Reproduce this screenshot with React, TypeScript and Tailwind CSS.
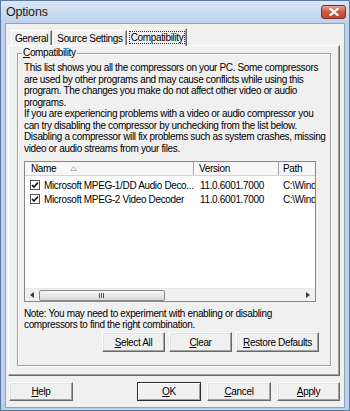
import React from "react";

function U({ children }: { children: React.ReactNode }) {
  return <span className="underline underline-offset-[1px]">{children}</span>;
}

function Btn({
  children,
  w,
  h = 20,
  def = false,
}: {
  children: React.ReactNode;
  w: number;
  h?: number;
  def?: boolean;
}) {
  return (
    <div
      style={{ width: w, height: h }}
      className={
        "flex items-center justify-center bg-[#f0f0f0] text-[10px] text-black border " +
        (def
          ? "border-[#2b2b2b] shadow-[inset_1px_1px_0_#ffffff,inset_-1px_-1px_0_#a0a0a0]"
          : "border-t-[#ffffff] border-l-[#ffffff] border-b-[#696969] border-r-[#696969] shadow-[inset_-1px_-1px_0_#a0a0a0,inset_1px_1px_0_#e3e3e3]")
      }
    >
      {children}
    </div>
  );
}

function Check() {
  return (
    <div className="w-[10px] h-[10px] border border-[#555] bg-white flex items-center justify-center shrink-0">
      <svg width="8" height="8" viewBox="0 0 8 8">
        <path d="M1 4 L3 6 L7 1.5" stroke="#111" strokeWidth="1.6" fill="none" />
      </svg>
    </div>
  );
}

export default function App() {
  const p1 = [
    "This list shows you all the compressors on your PC. Some compressors",
    "are used by other programs and may cause conflicts while using this",
    "program. The changes you make do not affect other video or audio",
    "programs.",
  ];
  const p2 = [
    "If you are experiencing problems with a video or audio compressor you",
    "can try disabling the compressor by unchecking from the list below.",
    "Disabling a compressor will fix problems such as system crashes, missing",
    "video or audio streams from your files.",
  ];
  const rows = [
    ["Microsoft MPEG-1/DD Audio Deco...", "11.0.6001.7000", "C:\\Windows"],
    ["Microsoft MPEG-2 Video Decoder", "11.0.6001.7000", "C:\\Windows"],
  ];
  return (
    <div className="w-[350px] h-[411px] flex flex-col bg-[#bcd2ea] border border-[#5a7aa3] font-['Liberation_Sans',Arial,sans-serif] text-black tracking-[-0.35px] overflow-hidden">
      {/* title bar */}
      <div className="h-[22px] shrink-0 flex items-center justify-between pl-[5px] pr-[3px] bg-gradient-to-b from-[#d9e7f6] to-[#bdd3ec]">
        <span className="text-[12.5px] tracking-[-0.2px] text-[#1a1a1a]">Options</span>
        <div className="w-[25px] h-[14px] rounded-[3px] border border-[#7a2f2f] bg-gradient-to-b from-[#e8a394] via-[#cf5440] to-[#c04a33] flex items-center justify-center mt-[-1px]">
          <svg width="10" height="8" viewBox="0 0 10 8">
            <path d="M1.5 1 L8.5 7 M8.5 1 L1.5 7" stroke="#ffffff" strokeWidth="2.2" strokeLinecap="square" />
          </svg>
        </div>
      </div>

      {/* client area */}
      <div className="flex-1 mx-[4px] mb-[3px] bg-[#f0f0f0] border border-[#8da4c0] flex flex-col pl-[2px] pr-[4px] pt-[3px] pb-[6px]">
        {/* tabs */}
        <div className="h-[18px] shrink-0 flex items-end pl-[3px] text-[10px] relative z-10">
          <div className="h-[15px] w-[41px] flex items-center justify-center border-t border-l border-white border-r border-r-[#696969] shadow-[inset_-1px_0_0_#a0a0a0]">
            General
          </div>
          <div className="h-[15px] w-[74px] ml-[1px] flex items-center justify-center border-t border-l border-white border-r border-r-[#696969] shadow-[inset_-1px_0_0_#a0a0a0]">
            Source Settings
          </div>
          <div className="h-[18px] w-[60px] mb-[-1px] bg-[#f0f0f0] flex items-center justify-center border-t border-l border-white border-r border-r-[#696969] shadow-[inset_-1px_0_0_#a0a0a0]">
            <span className="border border-dotted border-[#333] px-[1px] leading-[11px]">Compatibility</span>
          </div>
        </div>

        {/* tab panel */}
        <div className="h-[331px] shrink-0 border border-t-white border-l-white border-b-[#696969] border-r-[#696969] shadow-[inset_-1px_-1px_0_#a0a0a0] pt-[7px] pl-[8px] pr-[8px]">
          {/* group box */}
          <div className="relative h-[313px] border border-[#a0a0a0] shadow-[1px_1px_0_#ffffff,inset_1px_1px_0_#ffffff] pt-[8px] pl-[6px] pr-[14px] text-[10px]">
            <div className="absolute left-[4px] top-[-7px] bg-[#f0f0f0] px-[1px] leading-[12px]">
              <U>C</U>ompatibility
            </div>
            <div className="leading-[11.5px] whitespace-nowrap">
              {p1.map((l) => (
                <div key={l}>{l}</div>
              ))}
              {p2.map((l) => (
                <div key={l}>{l}</div>
              ))}
            </div>

            {/* list view */}
            <div className="mt-[7px] h-[141px] border border-[#828790] bg-white flex flex-col overflow-hidden">
              <div className="h-[14px] shrink-0 flex bg-[#f7f7f7] border-b border-[#d5d5d5] text-[10px]">
                <div className="w-[169px] flex items-center pl-[6px] border-r border-[#a0a0a0] shadow-[1px_0_0_#ffffff]">
                  Name
                  <svg width="7" height="5" viewBox="0 0 7 5" className="ml-[14px]">
                    <path d="M0.5 4.5 L3.5 0.5 L6.5 4.5 Z" fill="none" stroke="#b5b5b5" strokeWidth="1" />
                  </svg>
                </div>
                <div className="w-[85px] flex items-center pl-[5px] border-r border-[#a0a0a0]">Version</div>
                <div className="flex-1 flex items-center pl-[4px]">Path</div>
              </div>
              <div className="flex-1 pt-[2px]">
                {rows.map((r) => (
                  <div key={r[0]} className="h-[14px] flex items-center whitespace-nowrap">
                    <div className="w-[169px] flex items-center pl-[5px] gap-[4px] overflow-hidden">
                      <Check />
                      <span>{r[0]}</span>
                    </div>
                    <div className="w-[85px] pl-[6px]">{r[1]}</div>
                    <div className="flex-1 pl-[4px] overflow-hidden">{r[2]}</div>
                  </div>
                ))}
              </div>
              {/* horizontal scrollbar */}
              <div className="h-[13px] shrink-0 flex items-center bg-[#f0f0f0] border-t border-[#e8e8e8]">
                <div className="w-[14px] h-full flex items-center justify-center">
                  <svg width="4" height="6" viewBox="0 0 4 6">
                    <path d="M4 0 L0 3 L4 6 Z" fill="#3a3a3a" />
                  </svg>
                </div>
                <div className="w-[126px] h-[11px] rounded-[2px] border border-[#8a8a8a] bg-gradient-to-b from-[#f6f6f6] to-[#d8d8d8] flex items-center justify-center">
                  <svg width="6" height="5" viewBox="0 0 6 5">
                    <path d="M0.5 0 V5 M2.5 0 V5 M4.5 0 V5" stroke="#555" strokeWidth="1" />
                  </svg>
                </div>
                <div className="flex-1" />
                <div className="w-[14px] h-full flex items-center justify-center">
                  <svg width="4" height="6" viewBox="0 0 4 6">
                    <path d="M0 0 L4 3 L0 6 Z" fill="#3a3a3a" />
                  </svg>
                </div>
              </div>
            </div>

            <div className="mt-[7px] leading-[10.5px] whitespace-nowrap">
              <div>Note: You may need to experiment with enabling or disabling</div>
              <div>compressors to find the right combination.</div>
            </div>

            <div className="mt-[2px] flex justify-end gap-[4px] mr-[-3px]">
              <Btn w={63}>
                <U>S</U>elect All
              </Btn>
              <Btn w={63}>
                <U>C</U>lear
              </Btn>
              <Btn w={83}>
                <U>R</U>estore Defaults
              </Btn>
            </div>
          </div>
        </div>

        {/* bottom buttons */}
        <div className="mt-[6px] h-[19px] flex items-center pl-[1px]">
          <Btn w={64} h={19}>
            <U>H</U>elp
          </Btn>
          <div className="flex-1" />
          <div className="flex gap-[6px]">
            <Btn w={64} h={19} def>
              <U>O</U>K
            </Btn>
            <Btn w={64} h={19}>
              <U>C</U>ancel
            </Btn>
            <Btn w={63} h={19}>
              <U>A</U>pply
            </Btn>
          </div>
        </div>
      </div>
    </div>
  );
}
